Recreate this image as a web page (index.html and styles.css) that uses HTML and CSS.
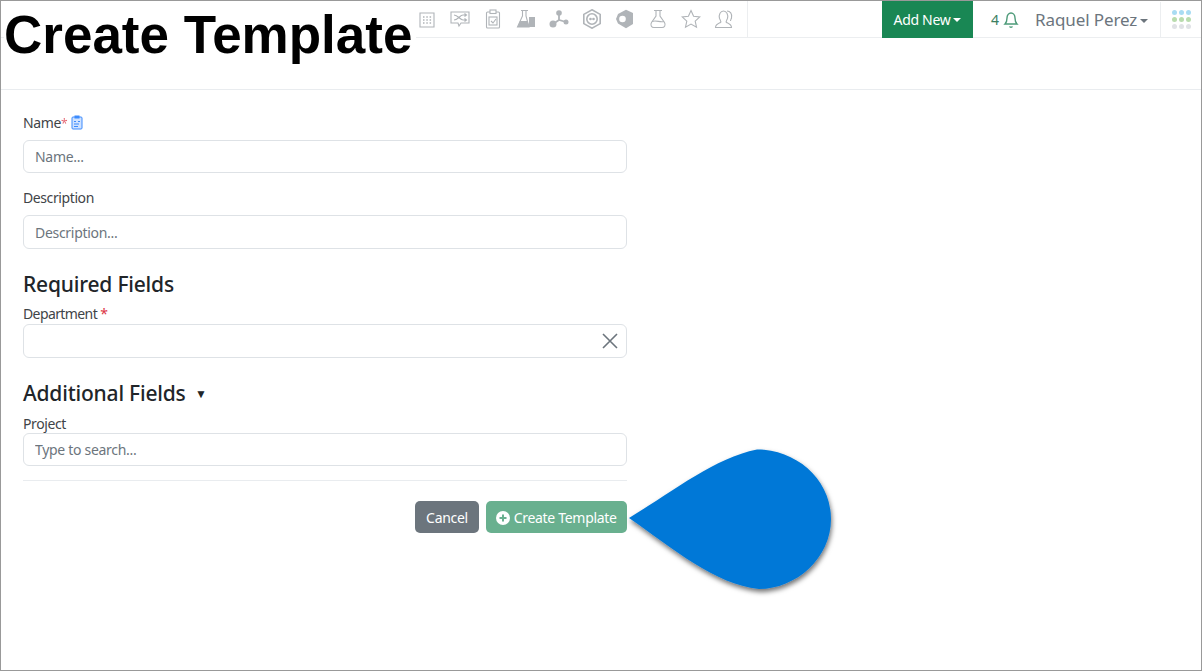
FILE: index.html
```html
<!DOCTYPE html>
<html>

<head>
    <title>Create Template</title>
    <link rel="stylesheet" href="styles.css">
</head>

<body>
    <div class="frame">
        <div class="navbar">
            <div class="nav-icons">
                <svg viewBox="0 0 20 20"><path d="M3 5V4h14v14H3V5z" fill="none"/><path d="M6 8h1.500M9.300 8h1.500M12.600 8h1.500M6 11h1.500M9.300 11h1.500M12.600 11h1.500M6 14h1.500M9.300 14h1.500M12.600 14h1.500" stroke-width="1.600"/></svg>
                <svg viewBox="0 0 20 20"><path d="M1 3h18v11h-8l-2 3-1-3H1z" fill="none"/><path d="M4 11c4 0 6-5 9-5h3M4 6c4 0 6 5 9 5h3M14.500 4.500L16.500 6l-2 1.500M14.500 9.500l2 1.500-2 1.500" fill="none"/></svg>
                <svg viewBox="0 0 20 20"><rect x="3.500" y="3" width="13" height="16" rx="1" fill="none"/><rect x="7" y="1" width="6" height="3.500" fill="#fff"/><rect x="6" y="8" width="8" height="8" fill="none"/><path d="M8 12l2 2 3-4" fill="none"/></svg>
                <svg viewBox="0 0 20 20"><path d="M5 1.500h7M6.500 1.500V7L1.500 18H13L10 7V1.500" fill="none"/><path d="M4 12h7.500l2 6H1.500z" class="solid"/><rect x="13" y="8" width="6" height="10" class="solid"/></svg>
                <svg viewBox="0 0 20 20"><circle cx="10" cy="4" r="2.800" class="solid"/><circle cx="4" cy="15" r="3.500" class="solid"/><circle cx="17" cy="13" r="2.500" class="solid"/><path d="M10 4v7M4 15l6-4 7 2" fill="none" stroke-width="1.800"/></svg>
                <svg viewBox="0 0 20 20"><path d="M10 .8l8.200 4.600v9.200L10 19.200l-8.200-4.600V5.400z" fill="none" stroke-width="1.600"/><circle cx="10" cy="10" r="5.200" fill="none" stroke-width="1.600"/><circle cx="8.500" cy="10" r="1.300" class="solid"/><circle cx="11.500" cy="10" r="1.300" class="solid"/></svg>
                <svg viewBox="0 0 20 20"><path d="M11 .8l7 3.200v11l-7 4.200-8-4.700L1 10l2-5z" class="solid"/><circle cx="7.500" cy="10" r="3.300" fill="#fff" stroke="none"/></svg>
                <svg viewBox="0 0 20 20"><path d="M6 1.500h8M8 1.500V7l-4.500 6.500C2 16 3.500 18.500 6 18.500h8c2.500 0 4-2.500 2.500-5L12 7V1.500" fill="none"/><path d="M4 12.500c4-1.500 8 1 12 0" fill="none"/></svg>
                <svg viewBox="0 0 20 20"><path d="M10 1.500l2.600 5.700 6.200.7-4.600 4.200 1.300 6.100L10 15.100l-5.500 3.100 1.300-6.100-4.600-4.200 6.200-.7z" fill="none"/></svg>
                <svg viewBox="0 0 20 20"><path d="M1.500 18.500c0-3 3-4 5-5 1-1 0-2-1-4-1-4 1-7.500 4-7.500s5 3.500 4 7.500c-1 2-2 3-1 4 2 1 5 2 5 5z" fill="none"/><path d="M13 2c3 0 5.500 2.500 4.500 7-.5 1.500-1 2-1 3" fill="none"/></svg>
            </div>
            <div class="nav-right">
                <button class="add-new">Add New<span class="caret"></span></button>
                <div class="alerts">4
                    <svg class="bell" viewBox="0 0 16 18"><path d="M2 13c1.500-1.500 2-3 2-6 0-3 1.800-5 4-5s4 2 4 5c0 3 .5 4.500 2 6z" fill="none"/><path d="M6.500 15.500c.5 1 2.500 1 3 0" fill="none"/></svg>
                </div>
                <div class="user">Raquel Perez<span class="caret"></span></div>
                <div class="apps">
                    <i class="blue"></i><i class="blue"></i><i class="blue"></i>
                    <i class="green"></i><i class="green"></i><i class="green"></i>
                    <i class="gray"></i><i class="gray"></i><i class="gray"></i>
                </div>
            </div>
        </div>
        <div class="subbar"></div>

        <form class="form">
            <label class="name-label">Name<span class="req name-req">*</span>
                <svg class="clip" viewBox="0 0 12 15"><rect x="1" y="2" width="10" height="12" rx="1" fill="#cfe2ff" stroke="#3d8bfd"/><rect x="3.500" y="0.500" width="5" height="3" fill="#3d8bfd"/><path d="M3 6.500h2M3 9h5M3 11.500h4M7 6.500h2" stroke="#3d8bfd"/></svg>
            </label>
            <input class="field field-short" placeholder="Name...">

            <label class="desc-label">Description</label>
            <input class="field" placeholder="Description...">

            <h3 class="required-title">Required Fields</h3>
            <label class="dept-label">Department <span class="req">*</span></label>
            <div class="field select-field">
                <svg viewBox="0 0 16 16"><path d="M1 1l14 14M15 1L1 15" fill="none" stroke="#6c757d" stroke-width="1.600"/></svg>
            </div>

            <h3 class="additional-title">Additional Fields <span class="tri">▼</span></h3>
            <label class="project-label">Project</label>
            <input class="field field-short" placeholder="Type to search...">

            <hr class="divider">

            <div class="actions">
                <button type="button" class="btn btn-cancel">Cancel</button>
                <button type="button" class="btn btn-create">
                    <svg viewBox="0 0 14 14"><circle cx="7" cy="7" r="7" fill="#fff"/><path d="M7 3.500v7M3.500 7h7" stroke="#69b08f" stroke-width="2"/></svg>
                    Create Template
                </button>
            </div>
        </form>

        <!-- annotation layer -->
        <div class="page-title">Create Template</div>
        <svg class="drop" viewBox="0 0 220 160" width="220" height="160">
            <defs>
                <filter id="dropShadow" x="-10%" y="-10%" width="120%" height="125%">
                    <feDropShadow dx="1" dy="3" stdDeviation="2.500" flood-color="#000" flood-opacity="0.55"/>
                </filter>
            </defs>
            <path d="M5 69C50 42 90 9 133 0.500C172 0.500 207 30 207 70C207 109 172 140 135 140C90 135 50 100 5 69Z" fill="#0078d7" filter="url(#dropShadow)"/>
        </svg>
    </div>
</body>

</html>
```

FILE: styles.css
```css
* {
    margin: 0;
    padding: 0;
    box-sizing: border-box;
}

body {
    font-family: "Noto Sans", "Open Sans", sans-serif;
    background: #fff;
    color: #212529;
    width: 1202px;
    height: 672px;
    overflow: hidden;
}

.frame {
    position: relative;
    width: 1202px;
    height: 671px;
    border: 1px solid #999;
    overflow: hidden;
}

.navbar {
    height: 37px;
    display: flex;
    justify-content: space-between;
    border-bottom: 1px solid #eceef0;
    padding-left: 416px;
}

.nav-icons {
    display: flex;
    align-items: center;
    gap: 13.050px;
    width: 331px;
    height: 36px;
    border-right: 1px solid #eceef0;
}

.nav-icons svg {
    width: 20px;
    height: 20px;
    flex: none;
    stroke: #b0b4b8;
    stroke-width: 1.100;
}

.nav-icons .solid {
    fill: #b0b4b8;
    stroke: none;
}

.nav-right {
    display: flex;
    align-items: center;
    height: 37px;
}

.add-new {
    width: 91px;
    height: 37px;
    background: #198754;
    border: none;
    color: #fff;
    font: inherit;
    font-size: 14px;
    letter-spacing: -0.300px;
}

.caret {
    display: inline-block;
    margin-left: 3px;
    vertical-align: 3px;
    border-top: 4px solid;
    border-left: 4px solid transparent;
    border-right: 4px solid transparent;
}

.alerts {
    display: flex;
    align-items: center;
    gap: 4px;
    margin-left: 18px;
    font-size: 14px;
    color: #3c7f62;
}

.bell {
    width: 16px;
    height: 18px;
    stroke: #4c9a78;
    stroke-width: 1.400;
}

.user {
    margin-left: 16px;
    width: 125px;
    font-size: 17px;
    letter-spacing: -0.100px;
    color: #6c757d;
}

.apps {
    width: 41px;
    height: 36px;
    border-left: 1px solid #eceef0;
    display: grid;
    grid-template-columns: repeat(3, 5px);
    grid-auto-rows: 5px;
    gap: 2px;
    align-content: center;
    justify-content: center;
}

.apps i {
    border-radius: 50%;
}

.apps .blue {
    background: #a9dcf3;
}

.apps .green {
    background: #b9dcae;
}

.apps .gray {
    background: #e0e2e6;
}

.subbar {
    height: 52px;
    border-bottom: 1px solid #e9ecef;
}

.form {
    width: 626px;
    padding-left: 22px;
    font-size: 14px;
    color: #3f4448;
}

.form label {
    display: block;
    line-height: 20px;
    letter-spacing: -0.400px;
}

.name-label {
    margin-top: 23px;
    margin-bottom: 6px;
}

.desc-label {
    margin-top: 15px;
    margin-bottom: 7px;
}

.form .dept-label {
    margin-top: 7px;
    letter-spacing: -0.600px;
}

.project-label {
    margin-top: 7px;
    margin-bottom: -1px;
}

.req {
    color: #dc3545;
}

.name-req {
    font-size: 12px;
    opacity: 0.75;
}

.clip {
    width: 12px;
    height: 15px;
    margin-left: 1px;
    vertical-align: -2px;
}

.field {
    display: block;
    width: 604px;
    height: 34px;
    border: 1px solid #dee2e6;
    border-radius: 6px;
    padding: 0 11px;
    font: inherit;
    font-size: 14px;
    letter-spacing: -0.300px;
    color: #212529;
    background: #fff;
}

.field-short {
    height: 33px;
}

.field::placeholder {
    color: #6c757d;
    opacity: 1;
}

.select-field {
    display: flex;
    align-items: center;
    justify-content: flex-end;
    padding-right: 8px;
}

.select-field svg {
    width: 16px;
    height: 16px;
}

h3 {
    font-size: 21px;
    font-weight: 500;
    line-height: 26px;
    color: #212529;
    letter-spacing: -0.200px;
}

.required-title {
    margin-top: 22px;
}

.additional-title {
    margin-top: 22px;
}

.tri {
    font-size: 12px;
    margin-left: 4px;
    vertical-align: 3px;
}

.divider {
    width: 604px;
    border: none;
    border-top: 1px solid #e9ecef;
    margin-top: 14px;
}

.actions {
    display: flex;
    justify-content: flex-end;
    gap: 7px;
    width: 604px;
    margin-top: 20px;
}

.btn {
    height: 32px;
    border: none;
    border-radius: 5px;
    color: #fff;
    font: inherit;
    font-size: 14px;
    letter-spacing: -0.300px;
}

.btn-cancel {
    width: 64px;
    background: #6c757d;
}

.btn-create {
    width: 141px;
    background: #69b08f;
}

.btn-create svg {
    width: 14px;
    height: 14px;
    vertical-align: -2px;
}

/* annotation layer */
.page-title {
    position: absolute;
    left: 3px;
    top: 5px;
    font-family: "Liberation Sans", Arial, sans-serif;
    font-size: 53px;
    font-weight: 700;
    line-height: 58px;
    color: #000;
    background: #fff;
    padding-right: 4px;
}

.drop {
    position: absolute;
    left: 623px;
    top: 448px;
    overflow: visible;
}
```
